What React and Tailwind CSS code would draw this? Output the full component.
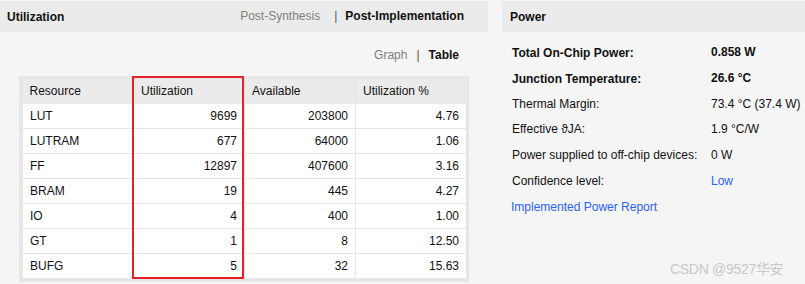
import React from "react";

const rows = [
  ["LUT", "9699", "203800", "4.76"],
  ["LUTRAM", "677", "64000", "1.06"],
  ["FF", "12897", "407600", "3.16"],
  ["BRAM", "19", "445", "4.27"],
  ["IO", "4", "400", "1.00"],
  ["GT", "1", "8", "12.50"],
  ["BUFG", "5", "32", "15.63"],
];

const power = [
  { l: "Total On-Chip Power:", v: "0.858 W", b: true, h: "h-[26px]" },
  { l: "Junction Temperature:", v: "26.6 °C", b: true, h: "h-[26px]" },
  { l: "Thermal Margin:", v: "73.4 °C (37.4 W)", h: "h-[24px]" },
  { l: "Effective ϑJA:", v: "1.9 °C/W", h: "h-[26px]" },
  { l: "Power supplied to off-chip devices:", v: "0 W", h: "h-[26px]" },
  { l: "Confidence level:", v: "Low", link: true, h: "h-[26px]" },
];

export default function App() {
  return (
    <div
      className="relative w-[805px] h-[284px] bg-[#f5f5f5] flex gap-[14px] pt-px text-[12px] text-[#111]"
      style={{ fontFamily: '"Liberation Sans", Arial, sans-serif' }}
    >
      {/* Utilization panel */}
      <div className="w-[488px] flex flex-col">
        <div className="h-[31px] bg-[#ebebeb] flex items-center justify-between pl-[7px] pr-[24px]">
          <span className="font-bold">Utilization</span>
          <div className="flex items-center -mt-[2px]">
            <span className="text-[#808080]">Post-Synthesis</span>
            <span className="ml-[14px] mr-[8px] text-[#555]">|</span>
            <span className="font-bold">Post-Implementation</span>
          </div>
        </div>
        <div className="h-[44px] flex items-center justify-end pr-[29px] pt-[1px]">
          <span className="text-[#808080]">Graph</span>
          <span className="mx-[9px] text-[#555]">|</span>
          <span className="font-bold">Table</span>
        </div>
        <div className="relative ml-[19px] w-[450px] bg-[#e6e6e6] p-[3px]">
          <table className="w-[444px] border-collapse table-fixed">
            <thead>
              <tr className="h-[24px] bg-[#ebebeb]">
                {["Resource", "Utilization", "Available", "Utilization %"].map((h, i) => (
                  <th
                    key={h}
                    className={`font-normal text-left pl-[7px] w-[111px] ${i > 0 ? "border-l border-[#e2e2e2]" : ""}`}
                  >
                    {h}
                  </th>
                ))}
              </tr>
            </thead>
            <tbody>
              {rows.map((r) => (
                <tr key={r[0]} className="h-[25px] bg-white">
                  {r.map((c, i) => (
                    <td
                      key={i}
                      className={`border border-[#e6e6e6] ${i === 0 ? "text-left pl-[7px]" : "text-right pr-[7px]"}`}
                    >
                      {c}
                    </td>
                  ))}
                </tr>
              ))}
            </tbody>
          </table>
          <div className="absolute left-[113px] top-0 w-[112px] h-[203px] border-2 border-[#e8202a] pointer-events-none" />
        </div>
      </div>

      {/* Power panel */}
      <div className="flex-1 flex flex-col">
        <div className="h-[31px] bg-[#ebebeb] flex items-center pl-[8px] pt-[1px]">
          <span className="font-bold">Power</span>
        </div>
        <div className="pt-[8px] pl-[10px] flex flex-col">
          {power.map((p) => (
            <div key={p.l} className={`${p.h} flex items-center`}>
              <span className={`w-[199px] ${p.b ? "font-bold" : ""}`}>{p.l}</span>
              <span
                className={`${p.b ? "font-bold -mt-[3px]" : ""} ${p.link ? "text-[#2962ff]" : ""}`}
              >
                {p.v}
              </span>
            </div>
          ))}
          <div className="h-[26px] flex items-center -ml-[1px]">
            <span className="text-[#2962ff]">Implemented Power Report</span>
          </div>
        </div>
      </div>

      <div className="absolute left-[670px] top-[259px] text-[14px] text-[#c8c8c8] tracking-[-0.3px]" style={{ fontFamily: '"Liberation Sans", "Noto Sans CJK SC", sans-serif' }}>
        CSDN @9527华安
      </div>
    </div>
  );
}
